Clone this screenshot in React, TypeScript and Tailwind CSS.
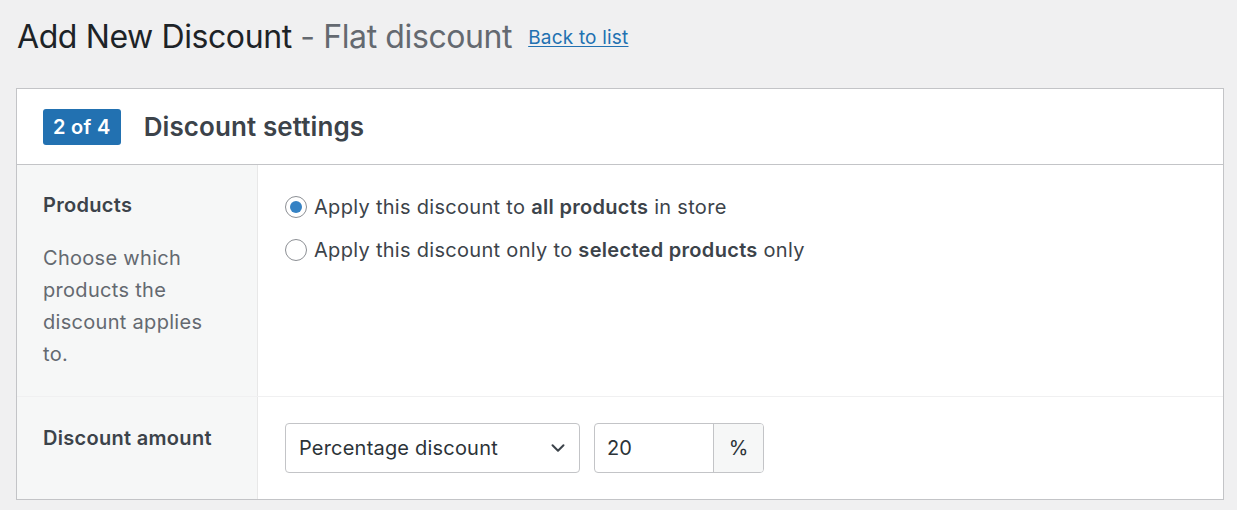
import { ChevronDown } from "lucide-react";

const FONT = { fontFamily: "Inter, 'Noto Sans', sans-serif" };

function Radio({ checked, children }: { checked?: boolean; children: React.ReactNode }) {
  return (
    <label className="flex items-center gap-[7px] text-[20px] leading-[26px] tracking-[0.3px] text-[#3c434a]">
      <span className="flex h-[22px] w-[22px] items-center justify-center rounded-full border border-[#8c8f94] bg-white">
        {checked && <span className="h-[12px] w-[12px] rounded-full bg-[#3582c4]" />}
      </span>
      <span>{children}</span>
    </label>
  );
}

export default function App() {
  return (
    <div className="min-h-[510px] bg-[#f0f0f1] pl-4 pr-[13px] pt-[17px]" style={FONT}>
      <div className="flex items-center gap-4 pl-px">
        <h1 className="text-[32px] font-normal leading-[40px] tracking-[-0.4px] text-[#1d2327]">
          Add New Discount <span className="text-[#646970]">- Flat discount</span>
        </h1>
        <a href="#" className="pt-[2px] text-[19px] tracking-[0.2px] text-[#2271b1] underline underline-offset-2">
          Back to list
        </a>
      </div>

      <div className="mt-[31px] border border-[#c3c4c7] bg-white">
        <div className="flex h-[76px] items-center gap-[23px] border-b border-[#c3c4c7] px-[26px]">
          <span className="rounded-[3px] bg-[#2271b1] px-[10px] py-[5px] text-[20px] font-semibold leading-[26px] tracking-[0.3px] text-white">
            2 of 4
          </span>
          <h2 className="text-[26px] font-semibold tracking-[0.1px] text-[#3c434a]">Discount settings</h2>
        </div>

        <div className="flex border-b border-[#f0f0f1]">
          <div className="w-[241px] shrink-0 border-r border-[#e8e8e8] bg-[#f6f7f7] px-[26px] pb-[26px] pt-[27px]">
            <div className="text-[20px] font-semibold leading-[26px] tracking-[0.3px] text-[#3c434a]">Products</div>
            <p className="mt-[24px] w-[180px] text-[20px] leading-[32px] tracking-[0.3px] text-[#646970]">
              Choose which products the discount applies to.
            </p>
          </div>
          <div className="flex flex-col gap-[17px] px-[27px] pt-[29px]">
            <Radio checked>
              Apply this discount to <b className="font-semibold">all products</b> in store
            </Radio>
            <Radio>
              Apply this discount only to <b className="font-semibold">selected products</b> only
            </Radio>
          </div>
        </div>

        <div className="flex">
          <div className="h-[102px] w-[241px] shrink-0 border-r border-[#e8e8e8] bg-[#f6f7f7] px-[26px] pt-[28px]">
            <div className="text-[20px] font-semibold leading-[26px] tracking-[0.3px] text-[#3c434a]">Discount amount</div>
          </div>
          <div className="flex items-start gap-[14px] px-[27px] pt-[26px]">
            <div className="flex h-[50px] w-[295px] items-center justify-between rounded-[4px] border border-[#c3c4c7] bg-white pl-[13px] pr-[10px] text-[20px] tracking-[0.2px] text-[#2c3338]">
              <span>Percentage discount</span>
              <ChevronDown className="h-[22px] w-[22px] text-[#3c434a]" strokeWidth={2.2} />
            </div>
            <div className="flex h-[50px] w-[170px] overflow-hidden rounded-[4px] border border-[#c3c4c7] bg-white text-[20px] text-[#2c3338]">
              <span className="flex flex-1 items-center px-[12px]">20</span>
              <span className="flex w-[50px] items-center justify-center border-l border-[#c3c4c7] bg-[#f6f7f7]">%</span>
            </div>
          </div>
        </div>
      </div>
    </div>
  );
}
